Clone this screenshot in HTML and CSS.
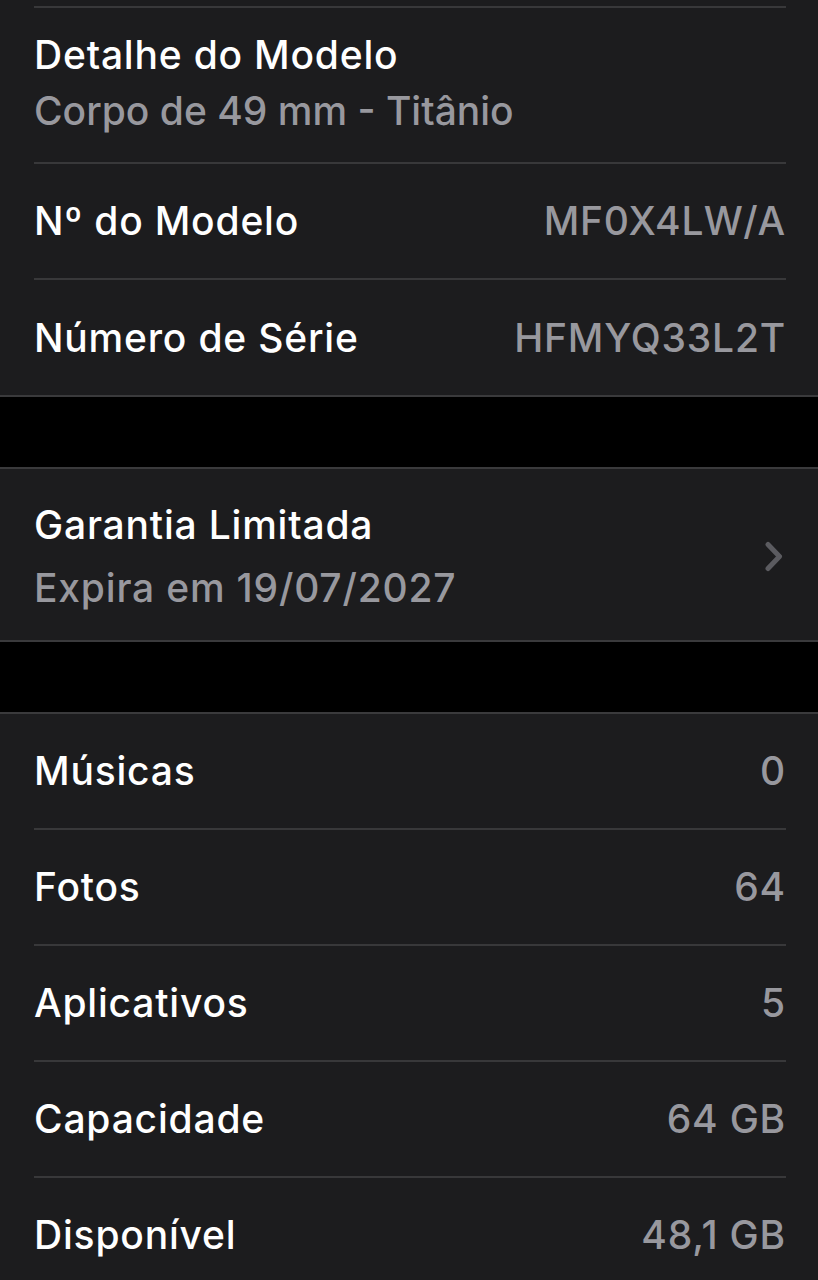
FILE: index.html
```html
<!DOCTYPE html>
<html lang="pt-BR">
<head>
<meta charset="utf-8">
<title>Sobre</title>
<link rel="stylesheet" href="styles.css">
</head>
<body>
  <section class="group group--first">
    <div class="stub"></div>
    <div class="row row--two row--detail">
      <div class="row__title">Detalhe do Modelo</div>
      <div class="row__sub row__sub--tight">Corpo de 49 mm - Titânio</div>
    </div>
    <div class="row">
      <span class="row__title">Nº do Modelo</span>
      <span class="row__value">MF0X4LW/A</span>
    </div>
    <div class="row row--tall">
      <span class="row__title">Número de Série</span>
      <span class="row__value">HFMYQ33L2T</span>
    </div>
  </section>

  <div class="gap"></div>

  <section class="group">
    <div class="row row--two row--warranty">
      <div class="row__text">
        <div class="row__title">Garantia Limitada</div>
        <div class="row__sub">Expira em 19/07/2027</div>
      </div>
      <svg class="chevron" width="20" height="32" viewBox="0 0 20 32" aria-hidden="true">
        <path d="M4 3.5 L15.5 15.5 L4 27.5" fill="none" stroke="#5b5b60" stroke-width="5" stroke-linecap="round" stroke-linejoin="round"/>
      </svg>
    </div>
  </section>

  <div class="gap"></div>

  <section class="group">
    <div class="row">
      <span class="row__title">Músicas</span>
      <span class="row__value">0</span>
    </div>
    <div class="row">
      <span class="row__title">Fotos</span>
      <span class="row__value">64</span>
    </div>
    <div class="row">
      <span class="row__title">Aplicativos</span>
      <span class="row__value">5</span>
    </div>
    <div class="row">
      <span class="row__title">Capacidade</span>
      <span class="row__value">64 GB</span>
    </div>
    <div class="row">
      <span class="row__title">Disponível</span>
      <span class="row__value">48,1 GB</span>
    </div>
  </section>
</body>
</html>
```

FILE: styles.css
```css
html, body {
  margin: 0;
  padding: 0;
  background: #000;
}

body {
  font-family: Inter, "Noto Sans", "Liberation Sans", sans-serif;
  font-size: 39px;
  font-weight: 500;
  color: #fff;
  letter-spacing: 0.8px;
}

.group {
  background: #1c1c1e;
  border-top: 2px solid #3a3a3c;
  border-bottom: 2px solid #3a3a3c;
}

.group--first {
  border-top: none;
}

.stub {
  height: 6px;
}

.gap {
  height: 70px;
}

.row {
  margin: 0 32px 0 34px;
  height: 114px;
  display: flex;
  align-items: center;
  justify-content: space-between;
  box-sizing: border-box;
}

.row + .row,
.stub + .row {
  border-top: 2px solid #38383a;
  height: 116px;
}

.row--tall {
  height: 117px !important;
}

.row__title {
  line-height: 44px;
  white-space: nowrap;
}

.row__value {
  line-height: 44px;
  color: #98989e;
  white-space: nowrap;
}

.row__sub {
  line-height: 44px;
  color: #98989e;
  white-space: nowrap;
}

.row__sub--tight {
  letter-spacing: 0;
}

.row--two {
  height: auto !important;
}

.row--detail {
  flex-direction: column;
  align-items: flex-start;
  justify-content: flex-start;
  gap: 12px;
  padding: 25px 0 29px;
}

.row--warranty {
  padding: 34px 0 30px;
}

.row--warranty .row__text {
  display: flex;
  flex-direction: column;
  gap: 19px;
}

.chevron {
  display: block;
  margin-right: 2px;
}
```
